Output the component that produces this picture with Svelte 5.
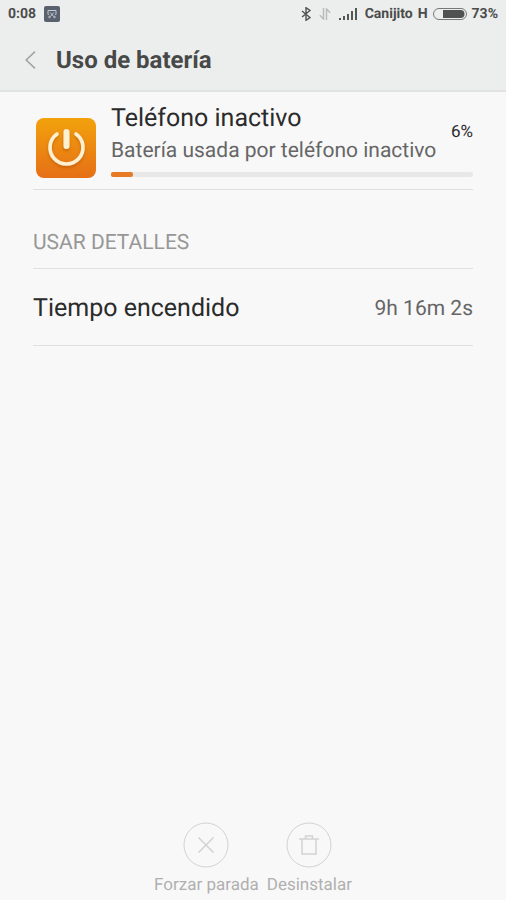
<script lang="ts">
  type Detail = { label: string; value: string }

  const time = '0:08'
  const carrier = 'Canijito'
  const network = 'H'
  const battery = 73

  const usage = {
    name: 'Teléfono inactivo',
    description: 'Batería usada por teléfono inactivo',
    percent: 6,
  }

  const details: Detail[] = [{ label: 'Tiempo encendido', value: '9h 16m 2s' }]
</script>

<div class="screen">
  <header class="header">
    <div class="status-bar">
      <div class="status-group">
        <span>{time}</span>
        <svg width="16" height="16" viewBox="0 0 16 16" aria-hidden="true">
          <rect width="16" height="16" rx="2" fill="#59616f" />
          <g fill="none" stroke="#c3c9d2" stroke-width="1">
            <path d="M4.500 9v-.5h-.5v-4h8v4h-.5V9" />
            <path d="M6.200 6.500l3.400 4M9.800 6.500l-3.400 4" />
            <circle cx="5.500" cy="11" r="0.800" />
            <circle cx="10.500" cy="11" r="0.800" />
          </g>
        </svg>
      </div>
      <div class="status-group">
        <svg width="10" height="14" viewBox="0 0 10 14" aria-hidden="true">
          <path d="M1 4l8 6.500L5 13.300V.7l4 2.800L1 10" fill="none" stroke="#505251" stroke-width="1.400" />
        </svg>
        <svg width="12" height="12" viewBox="0 0 12 12" aria-hidden="true">
          <path d="M4.500 0v11L.8 7.300M7.500 12V1l3.700 3.700" fill="none" stroke="#babcbb" stroke-width="1.500" />
        </svg>
        <svg width="18" height="12" viewBox="0 0 18 12" aria-hidden="true">
          <path d="M0 10h2v2H0zM4 8h2v4H4zM8 6h2v6H8zM12 3h2v9h-2zM16 0h2v12h-2z" fill="#555756" />
        </svg>
        <div class="status-text">
          <span>{carrier}</span>
          <span>{network}</span>
          <svg width="34" height="12" viewBox="0 0 34 12" aria-hidden="true">
            <rect x="0.500" y="0.500" width="33" height="11" rx="5.500" fill="none" stroke="#777978" />
            <path d="M10 2h17.500a4 4 0 0 1 0 8H10z" fill="#505251" />
          </svg>
          <span>{battery}%</span>
        </div>
      </div>
    </div>
    <div class="title-bar">
      <button class="back" type="button" aria-label="Atrás">
        <svg width="11" height="18" viewBox="0 0 11 18" aria-hidden="true">
          <path d="M10 .7L1.200 9l8.800 8.300" fill="none" stroke="#a2a4a3" stroke-width="1.600" />
        </svg>
      </button>
      <h1>Uso de batería</h1>
    </div>
  </header>

  <main>
    <section class="usage">
      <svg width="62" height="62" viewBox="0 0 62 62" aria-hidden="true">
        <defs>
          <linearGradient id="power-bg" x1="0" y1="0" x2="0" y2="1">
            <stop offset="0" stop-color="#f2a20c" />
            <stop offset="1" stop-color="#e66f16" />
          </linearGradient>
          <filter id="power-shadow" x="-20%" y="-20%" width="140%" height="150%">
            <feDropShadow dx="0" dy="2" stdDeviation="1.500" flood-color="#a84a00" flood-opacity="0.500" />
          </filter>
        </defs>
        <rect x="1" y="1" width="60" height="60" rx="8" fill="url(#power-bg)" />
        <g fill="none" stroke="#fff0cf" stroke-linecap="round" filter="url(#power-shadow)">
          <path d="M22 17a16.500 16.500 0 1 0 19 0" stroke-width="3.600" />
          <path d="M31.500 15v14" stroke-width="6" />
        </g>
      </svg>
      <div class="usage-body">
        <div class="usage-row">
          <div>
            <h2>{usage.name}</h2>
            <p>{usage.description}</p>
          </div>
          <span class="percent">{usage.percent}%</span>
        </div>
        <div class="track">
          <div class="fill" style:width="{usage.percent}%"></div>
        </div>
      </div>
    </section>

    <h3>USAR DETALLES</h3>
    <dl>
      {#each details as detail}
        <div class="detail">
          <dt>{detail.label}</dt>
          <dd>{detail.value}</dd>
        </div>
      {/each}
    </dl>
  </main>

  <footer>
    <button class="action" type="button" disabled>
      <svg width="46" height="46" viewBox="0 0 46 46" aria-hidden="true">
        <circle cx="23" cy="23" r="22" />
        <path d="M15.500 15.500l15 15M30.500 15.500l-15 15" stroke-width="1.500" />
      </svg>
      Forzar parada
    </button>
    <button class="action" type="button" disabled>
      <svg width="46" height="46" viewBox="0 0 46 46" aria-hidden="true">
        <circle cx="23" cy="23" r="22" />
        <path d="M13 17h20M16 17v15h14V17M19.500 17v-3h7v3" stroke-width="1.500" />
      </svg>
      Desinstalar
    </button>
  </footer>
</div>

<style>
  :global(body) {
    background: #f8f8f8;
  }

  .screen {
    display: flex;
    flex-direction: column;
    min-height: 100vh;
    background: #f8f8f8;
    color: #2b2b2b;
    font-family: Roboto, 'Liberation Sans', sans-serif;
    text-rendering: geometricPrecision;
  }

  h1,
  h2,
  h3,
  p,
  dl,
  dd {
    margin: 0;
    font-weight: 400;
  }

  svg {
    display: block;
    flex-shrink: 0;
  }

  button {
    padding: 0;
    border: none;
    background: none;
    font-family: inherit;
    text-rendering: inherit;
  }

  .header {
    background: #eceeed;
    border-bottom: 2px solid #e2e3e3;
  }

  .status-bar {
    display: flex;
    align-items: center;
    justify-content: space-between;
    height: 28px;
    padding: 0 8px;
    color: #4a4c4b;
    font-size: 14px;
    font-weight: 700;
    line-height: 18px;
  }

  .status-group {
    display: flex;
    align-items: center;
    gap: 8px;
  }

  .status-text {
    display: flex;
    align-items: center;
    gap: 5px;
  }

  .title-bar {
    display: flex;
    align-items: center;
    gap: 20px;
    height: 62px;
    padding: 2px 25px 0;
    box-sizing: border-box;
  }

  .back {
    cursor: pointer;
  }

  h1 {
    color: #474948;
    font-size: 24px;
    font-weight: 700;
    line-height: 34px;
  }

  main {
    flex: 1;
    padding: 0 33px;
  }

  .usage {
    display: flex;
    align-items: flex-end;
    gap: 14px;
    padding: 10px 0 10px 2px;
    border-bottom: 1px solid #e0e0e0;
  }

  .usage-body {
    flex: 1;
    padding-bottom: 2px;
  }

  .usage-row {
    display: flex;
    align-items: center;
    justify-content: space-between;
    margin-bottom: 6px;
  }

  h2,
  dt {
    font-size: 25px;
    line-height: 34px;
  }

  p {
    color: #666;
    font-size: 21px;
    line-height: 30px;
  }

  .percent {
    padding-bottom: 4px;
    font-size: 17px;
  }

  .track {
    height: 5px;
    border-radius: 2px;
    background: #e8e8e8;
  }

  .fill {
    height: 100%;
    border-radius: 2px;
    background: #e67a25;
  }

  h3 {
    padding: 38px 0 10px;
    border-bottom: 1px solid #e0e0e0;
    color: #979797;
    font-size: 21px;
    line-height: 30px;
  }

  .detail {
    display: flex;
    align-items: center;
    justify-content: space-between;
    padding: 23px 0 19px;
    border-bottom: 1px solid #e0e0e0;
  }

  dd {
    color: #666;
    font-size: 21px;
    line-height: 30px;
  }

  footer {
    display: flex;
    justify-content: center;
    gap: 8px;
    padding-bottom: 3px;
  }

  .action {
    display: flex;
    flex-direction: column;
    align-items: center;
    gap: 5px;
    color: #b0b0b0;
    font-size: 17px;
    line-height: 24px;
  }

  .action svg {
    fill: none;
    stroke: #d2d2d2;
  }
</style>
